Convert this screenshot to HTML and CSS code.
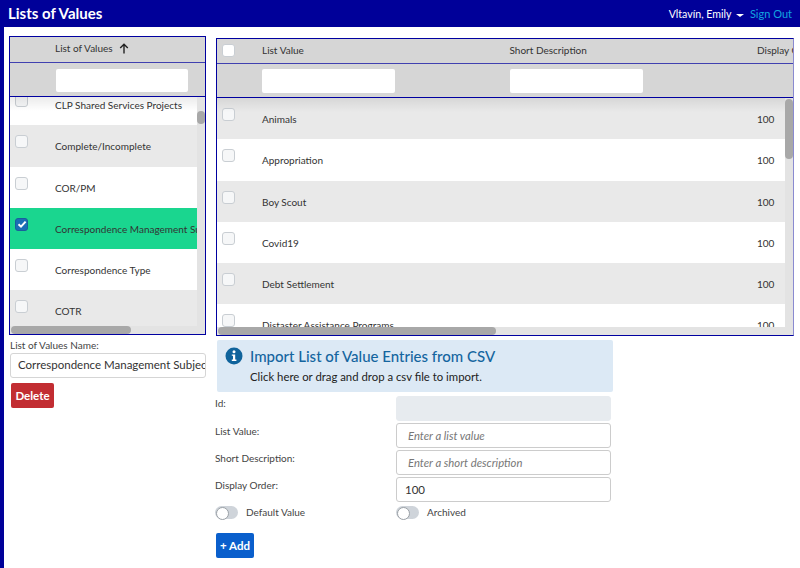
FILE: index.html
```html
<!DOCTYPE html>
<html lang="en">
<head>
<meta charset="utf-8">
<title>Lists of Values</title>
<link rel="stylesheet" href="styles.css">
</head>
<body>
<header class="topbar">
  <h1 class="title">Lists of Values</h1>
  <div class="user">Vltavín, Emily <span class="caret"></span></div>
  <a class="signout" href="#">Sign Out</a>
</header>
<main class="main">
  <section class="left">
    <div class="grid grid-left">
      <div class="head">
        <div class="cell-check"></div>
        <div class="head-label">List of Values
          <svg class="sort" width="10" height="11" viewBox="0 0 10 11"><path d="M5 10.5V1.5M1.2 5L5 1.2 8.8 5" fill="none" stroke="#222" stroke-width="1.4"/></svg>
        </div>
      </div>
      <div class="filter">
        <div class="cell-check"></div>
        <div class="filter-box wide"></div>
      </div>
      <div class="viewport">
        <div class="rows rows-left">
          <div class="row"><span class="box"></span><span class="cell">CLP Shared Services Projects</span></div>
          <div class="row odd"><span class="box"></span><span class="cell">Complete/Incomplete</span></div>
          <div class="row"><span class="box"></span><span class="cell">COR/PM</span></div>
          <div class="row selected"><span class="box checked"><svg width="10" height="10" viewBox="0 0 10 10"><path d="M1.5 5.2L4 7.6 8.6 2.6" fill="none" stroke="#fff" stroke-width="2"/></svg></span><span class="cell">Correspondence Management Subjects</span></div>
          <div class="row"><span class="box"></span><span class="cell">Correspondence Type</span></div>
          <div class="row odd"><span class="box"></span><span class="cell">COTR</span></div>
        </div>
        <div class="shade"></div>
        <div class="vtrack"><div class="vthumb vthumb-left"></div></div>
        <div class="htrack"><div class="hthumb hthumb-left"></div></div>
      </div>
    </div>
    <label class="name-label">List of Values Name:</label>
    <div class="name-input">Correspondence Management Subjects</div>
    <button class="btn btn-delete">Delete</button>
  </section>
  <section class="right">
    <div class="grid grid-right">
      <div class="head">
        <div class="cell-check"><span class="box head-box"></span></div>
        <div class="col col-a">List Value</div>
        <div class="col col-b">Short Description</div>
        <div class="col col-c">Display Order</div>
      </div>
      <div class="filter">
        <div class="cell-check"></div>
        <div class="col col-a"><div class="filter-box"></div></div>
        <div class="col col-b"><div class="filter-box"></div></div>
      </div>
      <div class="viewport">
        <div class="rows">
          <div class="row odd"><span class="box"></span><span class="col col-a">Animals</span><span class="col col-b"></span><span class="col col-c">100</span></div>
          <div class="row"><span class="box"></span><span class="col col-a">Appropriation</span><span class="col col-b"></span><span class="col col-c">100</span></div>
          <div class="row odd"><span class="box"></span><span class="col col-a">Boy Scout</span><span class="col col-b"></span><span class="col col-c">100</span></div>
          <div class="row"><span class="box"></span><span class="col col-a">Covid19</span><span class="col col-b"></span><span class="col col-c">100</span></div>
          <div class="row odd"><span class="box"></span><span class="col col-a">Debt Settlement</span><span class="col col-b"></span><span class="col col-c">100</span></div>
          <div class="row"><span class="box"></span><span class="col col-a">Distaster Assistance Programs</span><span class="col col-b"></span><span class="col col-c">100</span></div>
        </div>
        <div class="shade"></div>
        <div class="vtrack"><div class="vthumb vthumb-right"></div></div>
        <div class="htrack"><div class="hthumb hthumb-right"></div></div>
      </div>
    </div>
    <div class="import">
      <div class="import-title">
        <svg class="info" width="18" height="18" viewBox="0 0 18 18"><circle cx="9" cy="9" r="8.5" fill="#0f639c"/><circle cx="9" cy="4.8" r="1.5" fill="#fff"/><path d="M6.8 7.4H10.2V12.6H11.4V14H6.8V12.6H8V8.8H6.8Z" fill="#fff"/></svg>
        <span>Import List of Value Entries from CSV</span>
      </div>
      <div class="import-text">Click here or drag and drop a csv file to import.</div>
    </div>
    <div class="form">
      <div class="form-row"><label class="form-label form-label-id">Id:</label><div class="field field-disabled"></div></div>
      <div class="form-row"><label class="form-label">List Value:</label><div class="field placeholder">Enter a list value</div></div>
      <div class="form-row"><label class="form-label">Short Description:</label><div class="field placeholder">Enter a short description</div></div>
      <div class="form-row"><label class="form-label">Display Order:</label><div class="field field-value">100</div></div>
      <div class="toggles">
        <div class="toggle-wrap"><span class="toggle"></span><span>Default Value</span></div>
        <div class="toggle-wrap"><span class="toggle"></span><span>Archived</span></div>
      </div>
      <button class="btn btn-add">+ Add</button>
    </div>
  </section>
</main>
</body>
</html>
```
FILE: styles.css
```css
* { box-sizing: border-box; }
html, body { margin: 0; height: 100%; }
body {
  font-family: Lato, "Liberation Sans", sans-serif;
  font-size: 10px;
  color: #333;
  background: #fff;
  border-left: 4px solid #000099;
  overflow: hidden;
}
.topbar {
  margin-left: -4px;
  height: 27px;
  background: #000099;
  color: #fff;
  display: flex;
  align-items: center;
  padding: 0 8px 0 8px;
}
.title { margin: 0; font-size: 15px; font-weight: 700; flex: 1; line-height: 27px; }
.user { font-size: 10.6px; margin-right: 6px; }
.caret {
  display: inline-block;
  width: 0; height: 0;
  margin-left: 2px;
  vertical-align: 1px;
  border-left: 4px solid transparent;
  border-right: 4px solid transparent;
  border-top: 3px solid #fff;
}
.signout { color: #12a5e0; font-size: 11px; text-decoration: none; }
.main { display: flex; align-items: flex-start; padding: 9px 6px 0 5px; gap: 10px; }
.left { width: 197px; flex: none; }
.right { width: 578px; flex: none; margin-top: 2px; }
.grid { border: 1px solid #0000a0; overflow: hidden; background: #fff; }
.grid-left { height: 299px; }
.grid-right { height: 298px; border-right-color: #8a8ad0; }
.head, .filter { display: flex; background: #d6d6d6; white-space: nowrap; }
.head { height: 26px; align-items: center; border-bottom: 1px solid #4040b0; padding-bottom: 3px; }
.filter { height: 34px; align-items: center; border-bottom: 1px solid #0000a0; padding-top: 1px; }
.grid-right .head { height: 25px; padding-bottom: 2px; }
.cell-check { width: 45px; flex: none; padding-left: 5px; display: flex; }
.head-label { display: flex; align-items: center; gap: 6px; color: #333; }
.sort { flex: none; }
.filter-box { width: 133px; height: 24px; background: #fff; border-radius: 2px; }
.filter-box.wide { width: 132px; height: 23px; margin-left: 1px; }
.viewport { position: relative; height: 238px; overflow: hidden; }
.rows-left { margin-top: -13px; }
.row { display: flex; height: 41.3px; background: #fff; white-space: nowrap; padding-left: 5px; }
.row.odd { background: #e9e9e9; }
.row.selected { background: #1ad68f; }
.box {
  width: 13px; height: 13px; flex: none;
  margin-top: 10px;
  background: #f6f7f8;
  border: 1px solid #c9ced3;
  border-radius: 3px;
  display: flex; align-items: center; justify-content: center;
}
.head-box { margin-top: 0; background: #fff; width: 13px; height: 13px; }
.box.checked { background: #1b6fb5; border-color: #1a5f9c; }
.cell { margin-left: 27px; line-height: 43px; width: 142px; overflow: hidden; flex: none; }
.rows .col { line-height: 43px; }
.row .box + .col { margin-left: 27px; }
.col-a { width: 247.5px; flex: none; }
.col-b { width: 247.5px; flex: none; }
.col-c { width: 60px; flex: none; }
.shade { position: absolute; left: 0; right: 0; top: 0; height: 14px; background: linear-gradient(rgba(0,0,0,.08), rgba(0,0,0,0)); }
.vtrack { position: absolute; top: 0; right: 0; bottom: 0; width: 8px; background: #e3e3e3; }
.vthumb { position: absolute; left: 0; width: 8px; background: #a8a8a8; border-radius: 4px; }
.vthumb-left { top: 14px; height: 13px; }
.vthumb-right { top: 1px; height: 60px; }
.htrack { position: absolute; left: 0; right: 0; bottom: 0; height: 9px; background: #e3e3e3; }
.hthumb { position: absolute; top: 0; height: 8px; background: #a8a8a8; border-radius: 4px; }
.hthumb-left { left: 1px; width: 120px; }
.hthumb-right { left: 1px; width: 278px; }
.name-label { display: block; margin: 4px 0 0 1px; font-size: 10px; line-height: 13px; color: #444; }
.name-input {
  margin: 1px 0 0 1px;
  height: 25px; width: 196px;
  border: 1px solid #d5d5d5; border-radius: 3px;
  padding: 0 0 0 7px;
  font-size: 11.5px; line-height: 22px;
  overflow: hidden; white-space: nowrap;
  color: #333;
}
.btn {
  display: block; border: 0; border-radius: 2px;
  font-family: inherit; font-weight: 700; font-size: 11.5px; color: #fff;
}
.btn-delete { margin: 5px 0 0 2px; width: 43px; height: 25px; background: #c22d32; padding: 0; }
.import {
  margin: 4px 0 0 1px;
  width: 396px; height: 52px;
  background: #dce9f5;
  border-radius: 2px;
  padding: 6px 8px;
}
.import-title { display: flex; align-items: center; gap: 7px; font-size: 15px; font-weight: 500; color: #14659f; line-height: 20px; }
.info { flex: none; }
.import-text { margin: 4px 0 0 25px; font-size: 11.35px; color: #222; line-height: 14px; }
.form { margin-top: 4px; padding-right: 183px; }
.form-row { display: flex; height: 25px; margin-bottom: 2px; }
.form-label { width: 180px; flex: none; line-height: 17px; color: #444; margin-left: -1px; margin-right: 1px; }
.form-label-id { line-height: 15px; }
.field {
  width: 215px; height: 25px; flex: none;
  border: 1px solid #ccc; border-radius: 3px;
  padding: 0 11px;
  font-size: 11.5px; line-height: 23px; color: #333;
}
.field-value { padding: 0 8px; }
.field-disabled { background: #e7ebef; border-color: #e7ebef; }
.placeholder { font-style: italic; color: #777; font-size: 11.3px; }
.toggles { display: flex; margin: 3px 0 0 -1px; }
.toggle-wrap { display: flex; align-items: center; gap: 8px; width: 181px; height: 14px; color: #444; }
.toggle { width: 23px; height: 13px; border-radius: 7px; background: #cfd4da; position: relative; flex: none; }
.toggle::before {
  content: ""; position: absolute; left: 1px; top: 1px;
  width: 11px; height: 11px; border-radius: 50%;
  background: #fff; border: 1px solid #9aa0a6;
}
.btn-add { margin-top: 14px; width: 38px; height: 25px; background: #0a5fcc; padding: 0; }
```
